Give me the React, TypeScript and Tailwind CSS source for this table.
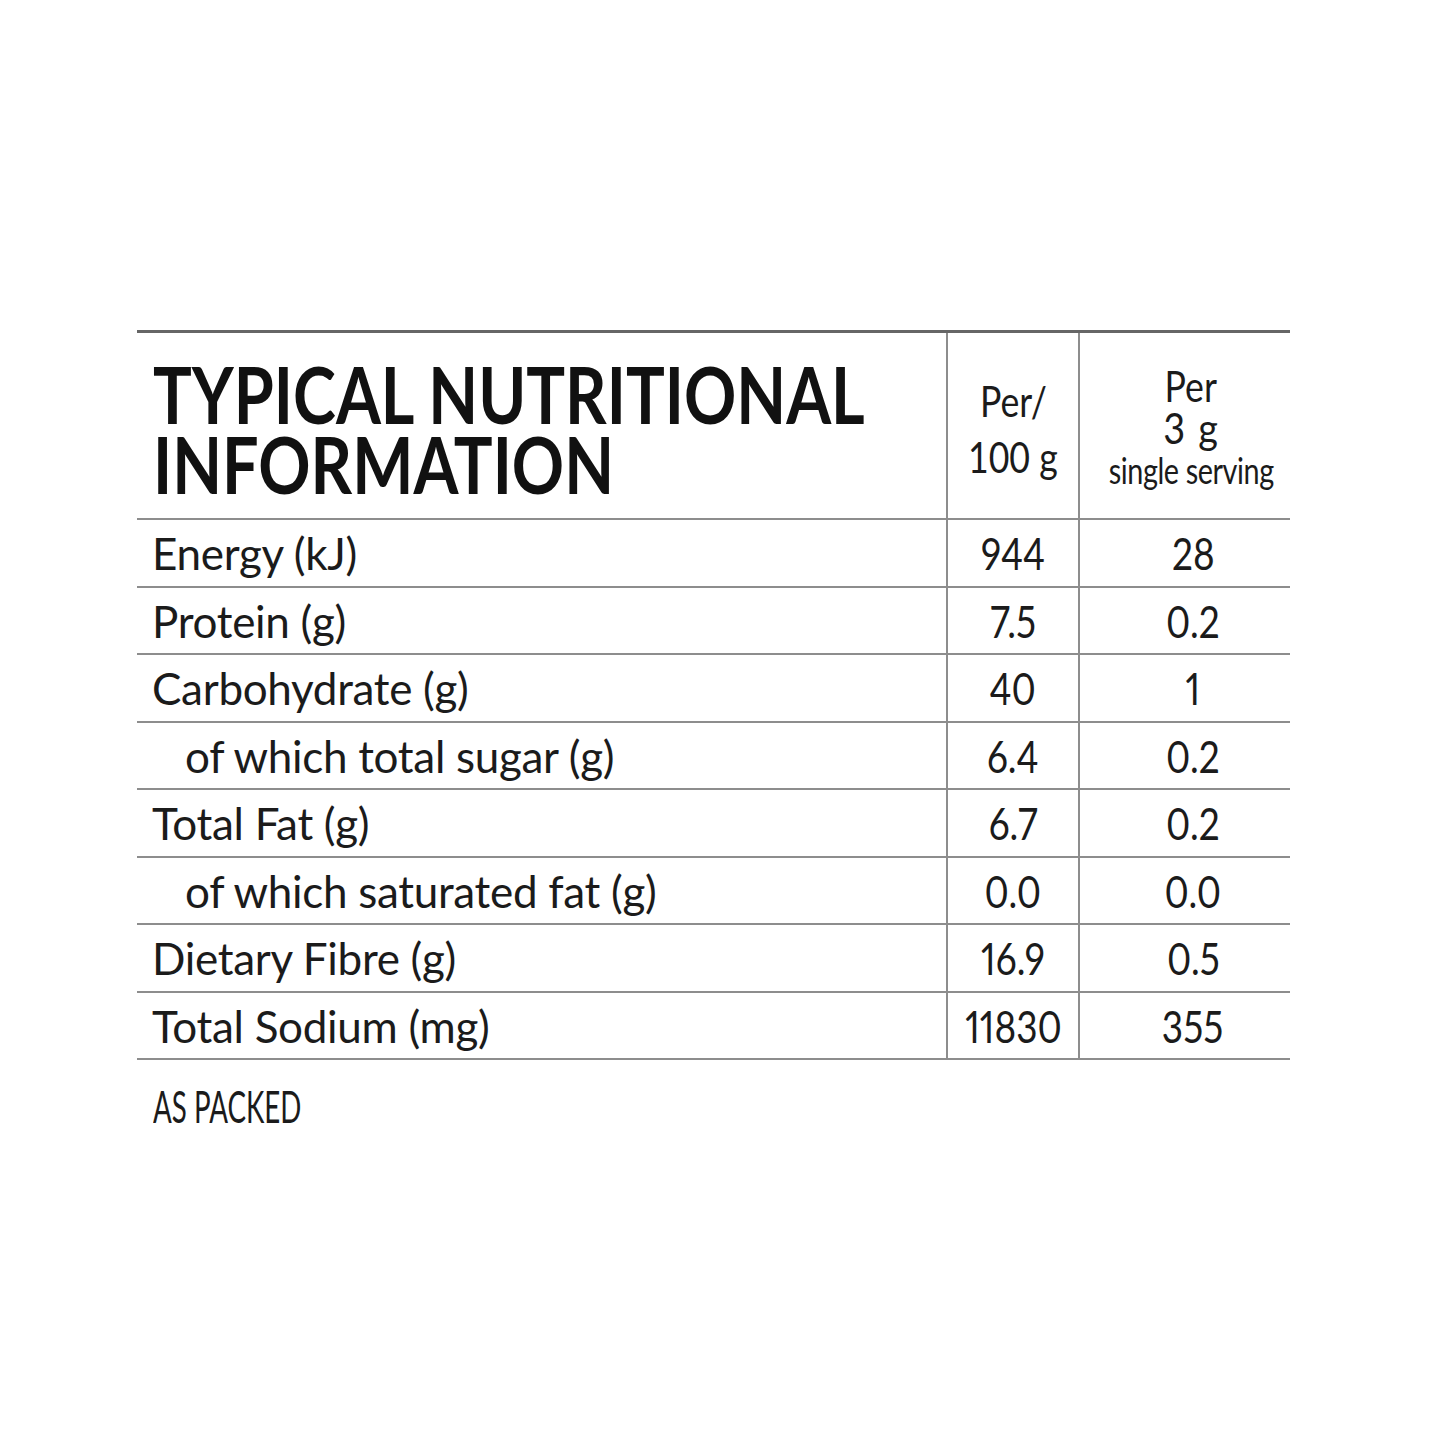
const rows: { label: string; indent?: boolean; per100: string; perServing: string }[] = [
  { label: 'Energy (kJ)', per100: '944', perServing: '28' },
  { label: 'Protein (g)', per100: '7.5', perServing: '0.2' },
  { label: 'Carbohydrate (g)', per100: '40', perServing: '1' },
  { label: 'of which total sugar (g)', indent: true, per100: '6.4', perServing: '0.2' },
  { label: 'Total Fat (g)', per100: '6.7', perServing: '0.2' },
  { label: 'of which saturated fat (g)', indent: true, per100: '0.0', perServing: '0.0' },
  { label: 'Dietary Fibre (g)', per100: '16.9', perServing: '0.5' },
  { label: 'Total Sodium (mg)', per100: '11830', perServing: '355' },
];

export default function App() {
  return (
    <div className="h-[1440px] w-[1440px] bg-white pl-[137px] pt-[330px] font-['Lato',sans-serif] text-[#1b1b1b]">
      <div className="w-[1153px]">
        {/* header */}
        <div className="grid h-[190px] grid-cols-[809px_132px_212px] border-t-[3px] border-b-2 border-t-[#666] border-b-[#8d8d8d]">
          <div className="pl-[16px] pt-[26px]">
            <h1 className="origin-left scale-x-[0.83] whitespace-nowrap text-[78px] leading-[70px] font-bold text-[#111]">
              <span className="block">TYPICAL NUTRITIONAL</span>
              <span className="block">INFORMATION</span>
            </h1>
          </div>
          <div className="flex flex-col items-center border-l-2 border-[#8d8d8d] pt-[40px] text-[42px] leading-[56px]">
            <span className="scale-x-[0.85]">Per/</span>
            <span className="scale-x-[0.85]">100 g</span>
          </div>
          <div className="flex flex-col items-center border-l-2 border-[#8d8d8d] pl-[12px] pt-[32px]">
            <span className="scale-x-[0.85] text-[42px] leading-[42px]">Per</span>
            <span className="scale-x-[0.9] text-[42px] leading-[42px] tracking-[2px]">3 g</span>
            <span className="whitespace-nowrap scale-x-[0.8] text-[36px] leading-[42px] tracking-[-0.5px]">single serving</span>
          </div>
        </div>
        {/* body rows */}
        {rows.map((r) => (
          <div
            key={r.label}
            className="grid h-[67.5px] grid-cols-[809px_132px_212px] items-stretch border-b-2 border-[#8d8d8d] text-[44px]"
          >
            <div className={r.indent ? 'flex items-center pl-[48px]' : 'flex items-center pl-[15px]'}>
              <span className="whitespace-nowrap tracking-[-0.3px]">{r.label}</span>
            </div>
            <div className="flex items-center justify-center border-l-2 border-[#8d8d8d]">
              <span className="scale-x-[0.84] proportional-nums">{r.per100}</span>
            </div>
            <div className="flex items-center justify-center border-l-2 border-[#8d8d8d] pl-[16px]">
              <span className="scale-x-[0.84] proportional-nums">{r.perServing}</span>
            </div>
          </div>
        ))}
        <div className="mt-[22px] pl-[16px]">
          <p className="origin-left scale-x-[0.63] whitespace-nowrap text-[44px] leading-[48px]">AS PACKED</p>
        </div>
      </div>
    </div>
  );
}
